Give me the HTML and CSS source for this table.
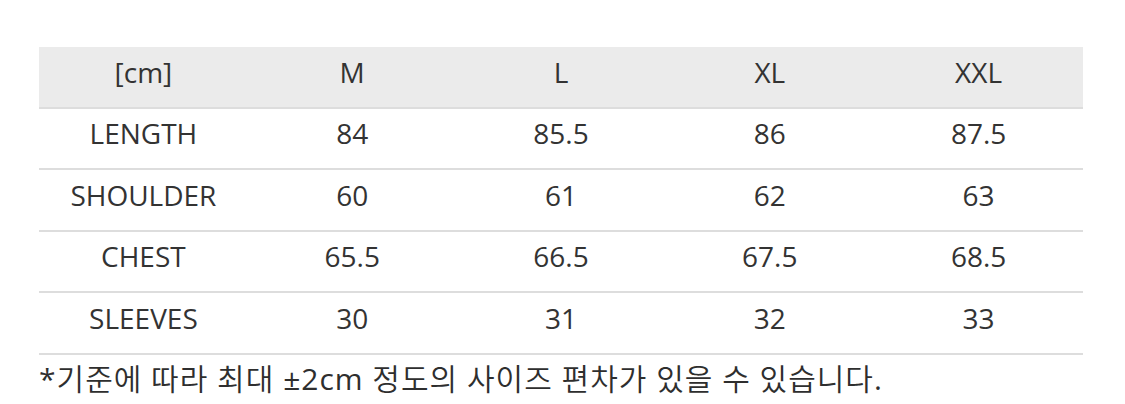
FILE: index.html
```html
<!DOCTYPE html>
<html lang="ko">
<head>
<meta charset="utf-8">
<title>Size chart</title>
<link rel="stylesheet" href="styles.css">
</head>
<body>
<div class="page">
  <table class="size-table">
    <thead>
      <tr><th>[cm]</th><th>M</th><th>L</th><th>XL</th><th>XXL</th></tr>
    </thead>
    <tbody>
      <tr><td>LENGTH</td><td>84</td><td>85.5</td><td>86</td><td>87.5</td></tr>
      <tr><td>SHOULDER</td><td>60</td><td>61</td><td>62</td><td>63</td></tr>
      <tr><td>CHEST</td><td>65.5</td><td>66.5</td><td>67.5</td><td>68.5</td></tr>
      <tr><td>SLEEVES</td><td>30</td><td>31</td><td>32</td><td>33</td></tr>
    </tbody>
  </table>
  <p class="note"><span class="latin">*</span>기준에 따라 최대 <span class="latin">±2cm</span> 정도의 사이즈 편차가 있을 수 있습니다<span class="latin">.</span></p>
</div>
</body>
</html>
```
FILE: styles.css
```css
html, body {
  margin: 0;
  padding: 0;
  background: #ffffff;
}
.page {
  padding: 47px 42px 0 39px;
  font-family: "Open Sans", "Noto Sans CJK KR", sans-serif;
  color: #333333;
}
.size-table {
  width: 1044px;
  border-collapse: separate;
  border-spacing: 0;
  table-layout: fixed;
}
.size-table th,
.size-table td {
  width: 20%;
  height: 61.5px;
  box-sizing: border-box;
  padding: 0 0 10px 0;
  text-align: center;
  vertical-align: middle;
  font-size: 28px;
  line-height: 38px;
  font-weight: 400;
  border-bottom: 2px solid #dddddd;
}
.size-table th {
  background: #ebebeb;
}
.note {
  margin: 3px 0 0 0;
  font-family: "Open Sans", "Noto Sans CJK KR", sans-serif;
  font-size: 30px;
  font-weight: 350;
  letter-spacing: 1px;
  line-height: 42px;
  color: #2e2e2e;
}
.note .latin {
  font-weight: 400;
}
```
